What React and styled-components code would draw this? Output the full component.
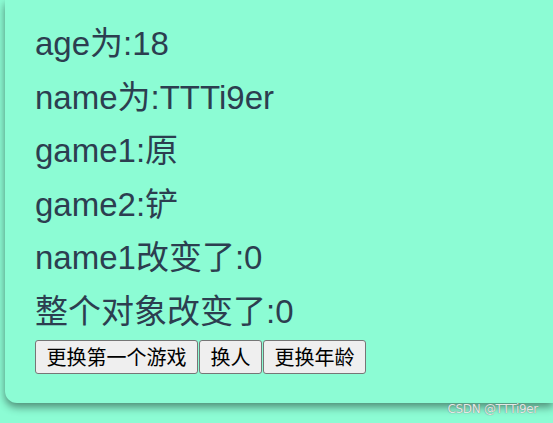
import React from "react";
import styled, { createGlobalStyle } from "styled-components";

const Global = createGlobalStyle`
  html, body { margin: 0; padding: 0; }
  body {
    background: #8cfcd4;
    overflow: hidden;
    font-family: "Liberation Sans", "Noto Sans CJK SC", sans-serif;
  }
`;

const Page = styled.div`
  width: 553px;
  height: 423px;
  position: relative;
  overflow: hidden;
`;

const Card = styled.div`
  margin-left: 5px;
  height: 403px;
  box-sizing: border-box;
  padding: 17px 0 30px 30px;
  background: #8cfcd4;
  border-bottom-left-radius: 12px;
  box-shadow: 0 4px 9px rgba(0, 0, 0, 0.45);
  display: flex;
  flex-direction: column;
`;

const Line = styled.div`
  font-family: "Liberation Sans", "Noto Sans CJK SC", sans-serif;
  font-size: 33px;
  line-height: 53.6px;
  height: 53.6px;
  color: #2c3e50;
  white-space: nowrap;
`;

const Buttons = styled.div`
  display: flex;
  gap: 1px;
  margin-top: 1px;
`;

const Btn = styled.button`
  height: 34px;
  padding: 0 10.5px;
  border: 1px solid #767676;
  border-radius: 3px;
  background: #efefef;
  color: #000;
  font-family: "Noto Sans CJK SC", sans-serif;
  font-size: 20px;
  line-height: 1;
  cursor: pointer;
`;

const Watermark = styled.div`
  position: absolute;
  right: 15px;
  bottom: 7px;
  font-family: "DejaVu Sans", sans-serif;
  font-size: 12px;
  color: #e4e8e6;
  text-shadow: 0 0 1px #5a6662;
  letter-spacing: -0.3px;
`;

const lines = [
  "age为:18",
  "name为:TTTi9er",
  "game1:原",
  "game2:铲",
  "name1改变了:0",
  "整个对象改变了:0",
];

export default function App() {
  return (
    <Page>
      <Global />
      <Card>
        {lines.map((t) => (
          <Line key={t}>{t}</Line>
        ))}
        <Buttons>
          <Btn>更换第一个游戏</Btn>
          <Btn>换人</Btn>
          <Btn>更换年龄</Btn>
        </Buttons>
      </Card>
      <Watermark>CSDN @TTTi9er</Watermark>
    </Page>
  );
}
